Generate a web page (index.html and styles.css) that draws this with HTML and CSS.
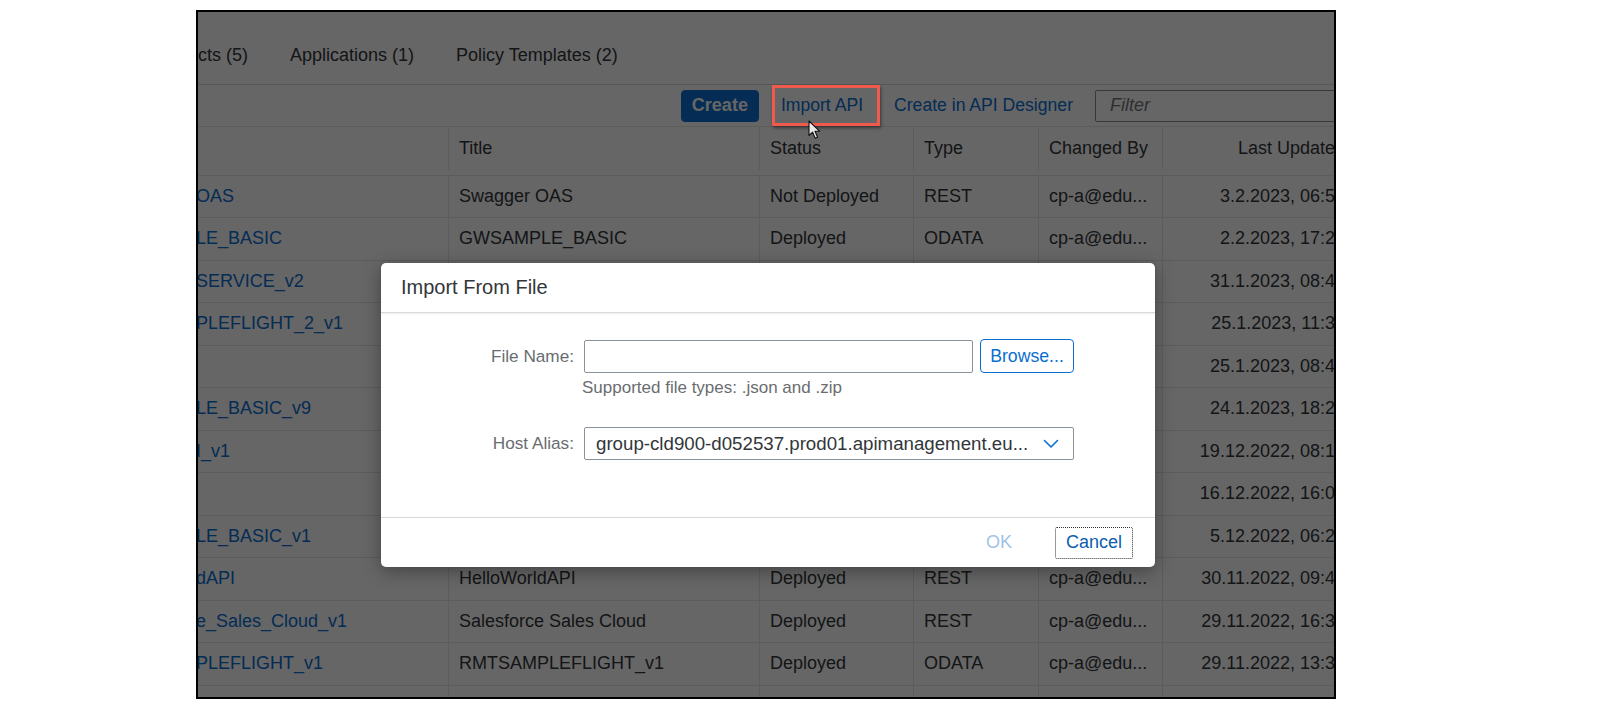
FILE: index.html
```html
<!DOCTYPE html>
<html lang="en">
<head>
<meta charset="utf-8">
<title>Import From File</title>
<link rel="stylesheet" href="styles.css">
</head>
<body>
<div class="page">
  <div class="frame">
    <div class="app">
      <div class="tabs">
        <span class="tab">cts (5)</span>
        <span class="tab">Applications (1)</span>
        <span class="tab">Policy Templates (2)</span>
      </div>
      <div class="toolbar">
        <button class="btn-emph">Create</button>
        <button class="btn-ghost">Import API</button>
        <button class="btn-ghost">Create in API Designer</button>
        <div class="filter">Filter</div>
      </div>
      <div class="table">
        <div class="row head">
          <div class="cell"></div>
          <div class="cell">Title</div>
          <div class="cell">Status</div>
          <div class="cell">Type</div>
          <div class="cell">Changed By</div>
          <div class="cell right">Last Updated</div>
        </div>
        <div class="row">
          <div class="cell link">OAS</div>
          <div class="cell">Swagger OAS</div>
          <div class="cell">Not Deployed</div>
          <div class="cell">REST</div>
          <div class="cell">cp-a@edu...</div>
          <div class="cell right">3.2.2023, 06:50</div>
        </div>
        <div class="row">
          <div class="cell link">LE_BASIC</div>
          <div class="cell">GWSAMPLE_BASIC</div>
          <div class="cell">Deployed</div>
          <div class="cell">ODATA</div>
          <div class="cell">cp-a@edu...</div>
          <div class="cell right">2.2.2023, 17:24</div>
        </div>
        <div class="row">
          <div class="cell link">SERVICE_v2</div>
          <div class="cell">EPM_REF_APPS_PROD_MAN_SRV</div>
          <div class="cell">Deployed</div>
          <div class="cell">ODATA</div>
          <div class="cell">cp-a@edu...</div>
          <div class="cell right">31.1.2023, 08:41</div>
        </div>
        <div class="row">
          <div class="cell link">PLEFLIGHT_2_v1</div>
          <div class="cell">RMTSAMPLEFLIGHT_2_v1</div>
          <div class="cell">Deployed</div>
          <div class="cell">ODATA</div>
          <div class="cell">cp-a@edu...</div>
          <div class="cell right">25.1.2023, 11:32</div>
        </div>
        <div class="row">
          <div class="cell link"></div>
          <div class="cell">Products</div>
          <div class="cell">Deployed</div>
          <div class="cell">REST</div>
          <div class="cell">cp-a@edu...</div>
          <div class="cell right">25.1.2023, 08:45</div>
        </div>
        <div class="row">
          <div class="cell link">LE_BASIC_v9</div>
          <div class="cell">GWSAMPLE_BASIC_v9</div>
          <div class="cell">Deployed</div>
          <div class="cell">ODATA</div>
          <div class="cell">cp-a@edu...</div>
          <div class="cell right">24.1.2023, 18:26</div>
        </div>
        <div class="row">
          <div class="cell link">I_v1</div>
          <div class="cell">API_v1</div>
          <div class="cell">Deployed</div>
          <div class="cell">REST</div>
          <div class="cell">cp-a@edu...</div>
          <div class="cell right">19.12.2022, 08:12</div>
        </div>
        <div class="row">
          <div class="cell link"></div>
          <div class="cell">Orders</div>
          <div class="cell">Deployed</div>
          <div class="cell">REST</div>
          <div class="cell">cp-a@edu...</div>
          <div class="cell right">16.12.2022, 16:03</div>
        </div>
        <div class="row">
          <div class="cell link">LE_BASIC_v1</div>
          <div class="cell">GWSAMPLE_BASIC_v1</div>
          <div class="cell">Deployed</div>
          <div class="cell">ODATA</div>
          <div class="cell">cp-a@edu...</div>
          <div class="cell right">5.12.2022, 06:27</div>
        </div>
        <div class="row">
          <div class="cell link">dAPI</div>
          <div class="cell">HelloWorldAPI</div>
          <div class="cell">Deployed</div>
          <div class="cell">REST</div>
          <div class="cell">cp-a@edu...</div>
          <div class="cell right">30.11.2022, 09:45</div>
        </div>
        <div class="row">
          <div class="cell link">e_Sales_Cloud_v1</div>
          <div class="cell">Salesforce Sales Cloud</div>
          <div class="cell">Deployed</div>
          <div class="cell">REST</div>
          <div class="cell">cp-a@edu...</div>
          <div class="cell right">29.11.2022, 16:38</div>
        </div>
        <div class="row">
          <div class="cell link">PLEFLIGHT_v1</div>
          <div class="cell">RMTSAMPLEFLIGHT_v1</div>
          <div class="cell">Deployed</div>
          <div class="cell">ODATA</div>
          <div class="cell">cp-a@edu...</div>
          <div class="cell right">29.11.2022, 13:37</div>
        </div>
        <div class="row">
          <div class="cell"></div>
          <div class="cell"></div>
          <div class="cell"></div>
          <div class="cell"></div>
          <div class="cell"></div>
          <div class="cell"></div>
        </div>
      </div>
    </div>

    <div class="overlay">
      <div class="dialog">
        <div class="dlg-header">Import From File</div>
        <div class="dlg-content">
          <div class="form">
            <label class="label">File Name:</label>
            <div class="field-line">
              <div class="input"></div>
              <button class="btn-browse">Browse...</button>
            </div>
            <div></div>
            <div class="hint">Supported file types: .json and .zip</div>
            <label class="label">Host Alias:</label>
            <div class="select">
              <span class="select-text">group-cld900-d052537.prod01.apimanagement.eu...</span>
              <svg class="chevron" width="16" height="10" viewBox="0 0 16 10"><path d="M1.5 1.5 L8 8 L14.5 1.5" fill="none" stroke="#0a6ed1" stroke-width="1.6" stroke-linecap="round" stroke-linejoin="round"/></svg>
            </div>
          </div>
        </div>
        <div class="dlg-footer">
          <button class="btn-ok">OK</button>
          <button class="btn-cancel">Cancel</button>
        </div>
      </div>
    </div>

    <div class="annot"></div>
    <svg class="cursor" width="14" height="20" viewBox="0 0 14 20"><path d="M1 1 L1 15.5 L4.6 12.2 L7.2 18.2 L9.6 17.2 L7 11.3 L11.8 11.3 Z" fill="#e8e8e8" stroke="#111" stroke-width="1.1" stroke-linejoin="round"/></svg>
  </div>
</div>
</body>
</html>
```

FILE: styles.css
```css
* { box-sizing: border-box; }

html, body {
  margin: 0;
  padding: 0;
  background: #ffffff;
}

body {
  width: 1600px;
  height: 708px;
  overflow: hidden;
  font-family: "Liberation Sans", Arial, sans-serif;
  color: #32363a;
}

.page {
  padding: 10px 0 0 196px;
}

.frame {
  position: relative;
  width: 1140px;
  height: 689px;
  border: 2px solid #000;
  overflow: hidden;
  background: #fff;
}

.app {
  width: 1162px;
  background: #fff;
}

/* tabs */
.tabs {
  height: 73px;
  display: flex;
  align-items: center;
  gap: 42px;
  padding-top: 14px;
  border-bottom: 1px solid #d9d9d9;
  font-size: 18px;
  color: #32363a;
}

/* toolbar */
.toolbar {
  height: 42px;
  display: flex;
  align-items: center;
  justify-content: flex-end;
  gap: 13px;
  padding-right: 10px;
  border-bottom: 1px solid #e5e5e5;
}

button {
  font-family: inherit;
  cursor: default;
}

.btn-emph {
  height: 32px;
  padding: 0 10px;
  border: 1px solid #0a6ed1;
  border-radius: 4px;
  background: #0a6ed1;
  color: #fff;
  font-size: 18px;
  font-weight: bold;
}

.btn-ghost {
  height: 32px;
  padding: 0 8px;
  border: 1px solid transparent;
  border-radius: 4px;
  background: transparent;
  color: #0a6ed1;
  font-size: 17.6px;
}

.filter {
  width: 255px;
  height: 32px;
  border: 1px solid #89919a;
  border-radius: 2px;
  padding-left: 14px;
  display: flex;
  align-items: center;
  font-size: 18px;
  font-style: italic;
  color: #74777a;
  background: #fff;
}

/* table */
.row {
  display: grid;
  grid-template-columns: 251px 311px 154px 125px 124px 197px;
  height: 42.5px;
  border-bottom: 1px solid #e5e5e5;
  font-size: 18px;
}
.row.head {
  height: 48.5px;
  padding-bottom: 5px;
  background: #fff;
}
.cell {
  display: flex;
  align-items: center;
  padding: 0 10px;
  border-right: 1px solid #e5e5e5;
  white-space: nowrap;
  overflow: hidden;
}
.cell.link {
  padding-left: 0;
  margin-left: -2px;
  color: #0a6ed1;
}
.cell.right {
  justify-content: flex-end;
  padding-right: 14px;
}

/* modal overlay */
.overlay {
  position: absolute;
  inset: 0;
  background: rgba(0, 0, 0, 0.6);
  display: flex;
  justify-content: center;
  align-items: flex-start;
  padding-top: 251px;
  padding-left: 4px;
}

.dialog {
  width: 774px;
  height: 304px;
  background: #fff;
  border-radius: 5px;
  box-shadow: 0 4px 18px rgba(0, 0, 0, 0.35);
  display: flex;
  flex-direction: column;
}

.dlg-header {
  height: 50px;
  flex: none;
  display: flex;
  align-items: center;
  padding-left: 20px;
  font-size: 20px;
  color: #32363a;
  border-bottom: 1px solid #d9d9d9;
  box-shadow: 0 1px 2px rgba(0, 0, 0, 0.08);
}

.dlg-content {
  flex: 1;
  padding-top: 26px;
}

.form {
  display: grid;
  grid-template-columns: 193px 490px;
  column-gap: 10px;
  align-items: center;
}

.label {
  text-align: right;
  font-size: 17.2px;
  color: #6a6d70;
}

.field-line {
  display: flex;
  align-items: center;
  gap: 7px;
}

.input {
  width: 389px;
  height: 33px;
  border: 1px solid #89919a;
  border-radius: 2px;
  background: #fff;
}

.btn-browse {
  width: 94px;
  height: 34px;
  padding: 0;
  border: 1px solid #0a6ed1;
  border-radius: 4px;
  background: #fff;
  color: #0a6ed1;
  font-size: 17.7px;
}

.hint {
  margin: 6px 0 30px -2px;
  line-height: 18px;
  font-size: 17px;
  color: #6a6d70;
}

.select {
  height: 33px;
  border: 1px solid #89919a;
  border-radius: 2px;
  display: flex;
  align-items: center;
  justify-content: space-between;
  padding: 0 14px 0 11px;
  font-size: 18.7px;
  color: #32363a;
  white-space: nowrap;
}

.chevron { display: block; flex: none; }

.dlg-footer {
  height: 50px;
  flex: none;
  border-top: 1px solid #d9d9d9;
  display: flex;
  align-items: center;
  justify-content: flex-end;
  gap: 27px;
  padding-right: 22px;
}

.btn-ok {
  height: 32px;
  padding: 0 16px;
  border: none;
  background: transparent;
  color: #9fc3e8;
  font-size: 18px;
}

.btn-cancel {
  width: 78px;
  height: 32px;
  padding: 0;
  border: 1px dotted #333;
  border-radius: 2px;
  background: #fff;
  color: #0a5eae;
  font-size: 18px;
}

/* annotation & pointer (drawn over the modal overlay) */
.annot {
  position: absolute;
  left: 574px;
  top: 73px;
  width: 108px;
  height: 41px;
  border: 3px solid #f05a4d;
  box-shadow: 1px 2px 3px rgba(0, 0, 0, 0.45);
}

.cursor {
  position: absolute;
  left: 610px;
  top: 108px;
}
```
